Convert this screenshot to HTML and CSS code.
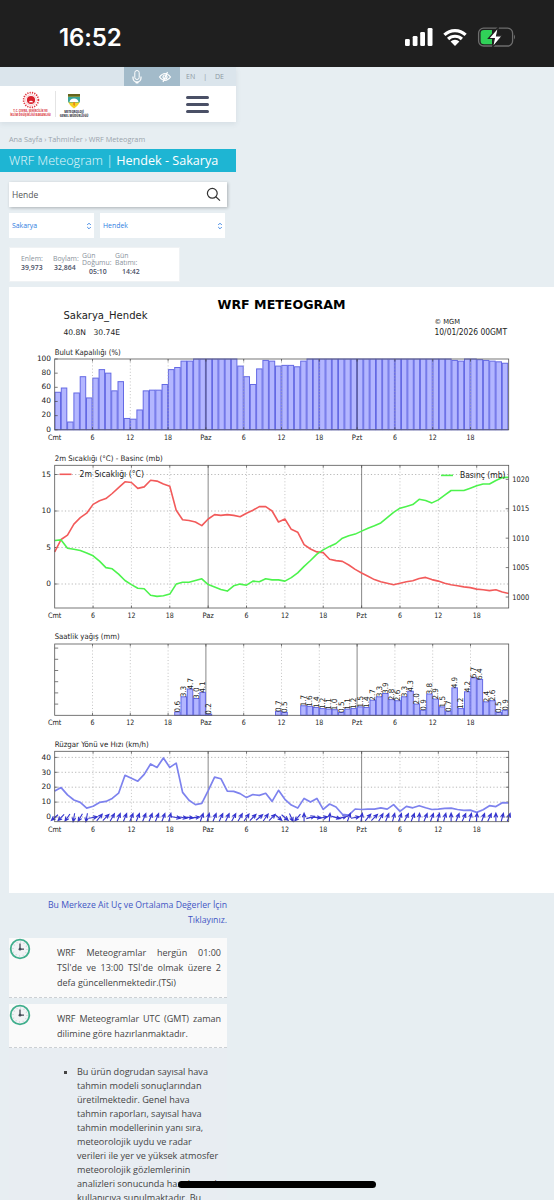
FILE: index.html
```html
<!DOCTYPE html>
<html lang="tr">
<head>
    <meta charset="UTF-8">
    <meta name="viewport" content="width=device-width, initial-scale=1.0">
    <title>WRF Meteogram - Hendek - Sakarya</title>
    <link rel="stylesheet" href="styles.css">
</head>
<body>
    <div class="status-bar">
        <span class="clock">16:52</span>
        <svg class="status-icons" width="112" height="22" viewBox="0 0 112 22">
            <g fill="#fff">
                <rect x="0" y="13" width="4.8" height="7" rx="1.3"/>
                <rect x="7.700" y="10" width="4.8" height="10" rx="1.3"/>
                <rect x="15.200" y="6" width="4.8" height="14" rx="1.3"/>
                <rect x="22.600" y="2" width="4.9" height="18" rx="1.3"/>
                <path d="M50 20 L45.6 15.6 A6.2 6.2 0 0 1 54.4 15.6 Z"/>
            </g>
            <g fill="none" stroke="#fff" stroke-width="3.200">
                <path d="M39.4 8.9 A15.3 15.3 0 0 1 60.6 8.9"/>
                <path d="M43.1 13 A10 10 0 0 1 56.9 13"/>
            </g>
            <rect x="73.600" y="2.200" width="34" height="17.800" rx="5" fill="none" stroke="#6d6d6d" stroke-width="1.300"/>
            <path d="M109 8.500 Q111 11 109 13.500Z" fill="#6d6d6d"/>
            <path d="M79 4 H87 V18.300 H79 Q75.600 18.300 75.600 15 V7.300 Q75.600 4 79 4Z" fill="#30d158"/>
            <path d="M93.500 1 L83.500 12.500 H89.300 L87.500 21.300 L97.300 9.800 H91.600 Z" fill="#fff" stroke="#1f1f1f" stroke-width="1.200"/>
        </svg>
    </div>

    <header class="header">
        <div class="topline">
            <div class="access">
                <svg width="12" height="16" viewBox="0 0 12 16" fill="none" stroke="#fff" stroke-width="1">
                    <rect x="3.800" y="1.500" width="4.400" height="9" rx="2.200"/>
                    <path d="M2 7.500 V9 A4 4 0 0 0 10 9 V7.500 M6 13 V14.500" stroke-width="1.200"/>
                    <path d="M4.500 13.500 H7.500" stroke-width="1.500"/>
                </svg>
                <svg width="14" height="12" viewBox="0 0 14 12" fill="none" stroke="#fff" stroke-width="1.200">
                    <path d="M1.500 6 Q7 -1 12.500 6 Q7 13 1.500 6Z"/>
                    <circle cx="7" cy="6" r="2"/>
                    <path d="M9.500 1 L5 11"/>
                </svg>
            </div>
            <div class="langs"><span>EN</span><span>|</span><span>DE</span></div>
        </div>
        <div class="navbar">
            <div class="logo ministry">
                <svg width="20" height="19" viewBox="0 0 20 19">
                    <circle cx="10" cy="9.500" r="7.800" fill="none" stroke="#e0343d" stroke-width="1.800" stroke-dasharray="1.300 1.200"/>
                    <circle cx="10" cy="9.500" r="5.600" fill="none" stroke="#f3a0a4" stroke-width=".6"/>
                    <circle cx="10" cy="9.500" r="4.300" fill="#d81f2a"/>
                    <path d="M7.500 11.800 Q10 9 12.500 11.800Z" fill="#fff"/>
                </svg>
                <p>T.C. ÇEVRE, ŞEHİRCİLİK VE<br>İKLİM DEĞİŞİKLİĞİ BAKANLIĞI</p>
            </div>
            <div class="logo mgm">
                <svg width="14" height="16" viewBox="0 0 14 16">
                    <path d="M1 1 H13 V8 Q12 12 7 15.500 Q2 12 1 8Z" fill="#f5d323"/>
                    <path d="M1 3.500 H13 V8 L12.500 9.500 H1.500 L1 8Z" fill="#3aa59b"/>
                    <path d="M1 1 H13 V3.500 H1Z" fill="#66641d"/>
                    <path d="M2.500 9 Q3 5.500 7 5.500 Q11 5.500 11.500 9Z" fill="#fff"/>
                    <path d="M6.200 9 H8 V13 L6.200 12Z" fill="#e48a1c"/>
                </svg>
                <p>METEOROLOJİ<br>GENEL MÜDÜRLÜĞÜ</p>
            </div>
            <button class="menu-toggle" aria-label="Menü"><i></i><i></i><i></i></button>
        </div>
    </header>

    <nav class="breadcrumb">Ana Sayfa › Tahminler › WRF Meteogram</nav>
    <h1 class="page-title">WRF Meteogram | <b>Hendek - Sakarya</b></h1>

    <div class="search">
        <span>Hende</span>
        <svg width="15" height="15" viewBox="0 0 15 15" fill="none" stroke="#333" stroke-width="1.200">
            <circle cx="6.300" cy="6.300" r="4.900"/>
            <path d="M9.800 9.800 L14 13.600"/>
        </svg>
    </div>
    <div class="selects">
        <div class="select city">Sakarya
            <svg width="6" height="8" viewBox="0 0 6 8"><path d="M1.200 3 L3 1.200 L4.800 3 M1.200 5 L3 6.800 L4.800 5"/></svg>
        </div>
        <div class="select district">Hendek
            <svg width="6" height="8" viewBox="0 0 6 8"><path d="M1.200 3 L3 1.200 L4.800 3 M1.200 5 L3 6.800 L4.800 5"/></svg>
        </div>
    </div>
    <div class="info">
        <div class="cell"><span>Enlem:</span><b>39,973</b></div>
        <div class="cell"><span>Boylam:</span><b>32,864</b></div>
        <div class="cell two"><span>Gün<br>Doğumu:</span><b>05:10</b></div>
        <div class="cell two"><span>Gün<br>Batımı:</span><b>14:42</b></div>
    </div>

    <svg id="meteogram" class="meteogram" viewBox="9 287 545 606"></svg>

    <div class="extremes"><a>Bu Merkeze Ait Uç ve Ortalama Değerler İçin<br>Tıklayınız.</a></div>

    <div class="notice">
        <svg class="notice-icon" width="22" height="22" viewBox="0 0 22 22">
            <circle cx="11" cy="11" r="9.300" fill="#f1f3f5" stroke="#3fae8c" stroke-width="1.800"/>
            <circle cx="11" cy="11" r="7" fill="none" stroke="#bfc6cc" stroke-width="1.200" stroke-dasharray=".8 2.865"/>
            <path d="M11 5.500 V11.200 H15" fill="none" stroke="#444a55" stroke-width="1.300"/>
            <circle cx="11" cy="11.200" r="1.400" fill="#444a55"/>
        </svg>
        <p class="fill">WRF Meteogramlar hergün 01:00</p>
        <p class="fill">TSİ'de ve 13:00 TSİ'de olmak üzere 2</p>
        <p>defa güncellenmektedir.(TSi)</p>
    </div>
    <div class="notice">
        <svg class="notice-icon" width="22" height="22" viewBox="0 0 22 22">
            <circle cx="11" cy="11" r="9.300" fill="#f1f3f5" stroke="#3fae8c" stroke-width="1.800"/>
            <circle cx="11" cy="11" r="7" fill="none" stroke="#bfc6cc" stroke-width="1.200" stroke-dasharray=".8 2.865"/>
            <path d="M11 5.500 V11.200 H15" fill="none" stroke="#444a55" stroke-width="1.300"/>
            <circle cx="11" cy="11.200" r="1.400" fill="#444a55"/>
        </svg>
        <p class="fill">WRF Meteogramlar UTC (GMT) zaman</p>
        <p>dilimine göre hazırlanmaktadır.</p>
    </div>
    <ul class="details">
        <li>Bu ürün dogrudan sayısal hava<br>tahmin modeli sonuçlarından<br>üretilmektedir. Genel hava<br>tahmin raporları, sayısal hava<br>tahmin modellerinin yanı sıra,<br>meteorolojik uydu ve radar<br>verileri ile yer ve yüksek atmosfer<br>meteorolojik gözlemlerinin<br>analizleri sonucunda hazırlanarak<br>kullanıcıya sunulmaktadır. Bu</li>
    </ul>
    <div class="home-indicator"></div>

    <script src="meteogram.js"></script>
</body>
</html>
```

FILE: styles.css
```css
* {
    margin: 0;
    padding: 0;
    box-sizing: border-box;
}

:root {
    --page-bg: #e7eef2;
    --accent: #1eb5d3;
    --link: #4255c4;
    --blue: #2e7de1;
}

body {
    width: 554px;
    height: 1200px;
    overflow: hidden;
    position: relative;
    background-color: var(--page-bg);
    font-family: "Open Sans", sans-serif;
    color: #444;
    font-size: 8px;
}

p, span, b, a, h1, nav {
    white-space: nowrap;
}

.status-bar {
    height: 67px;
    padding: 7px 37px 0 59px;
    background-color: #1f1f1f;
    display: flex;
    justify-content: space-between;
    align-items: center;
}

.clock {
    font-family: Inter, sans-serif;
    font-size: 24px;
    font-weight: 600;
    color: #fff;
    letter-spacing: -0.1px;
}

.header {
    width: 236px;
    height: 55px;
    box-shadow: 0 2px 5px rgba(80, 110, 130, 0.12);
}

.topline {
    height: 19px;
    background-color: #dbe5ec;
    display: flex;
    padding-left: 124px;
}

.access {
    width: 56px;
    background-color: #a3bbca;
    display: flex;
    align-items: center;
    justify-content: space-between;
    padding: 0 8px 0 7px;
}

.langs {
    display: flex;
    align-items: center;
    gap: 8px;
    padding-left: 6px;
    font-size: 7px;
    color: #8d99a3;
}

.navbar {
    height: 36px;
    background-color: #fff;
    display: flex;
    align-items: flex-start;
}

.logo {
    display: flex;
    flex-direction: column;
    align-items: center;
    font-weight: 800;
    line-height: 4px;
}

.ministry {
    width: 47px;
    height: 26px;
    margin: 5px 0 0 9px;
    padding-right: 3px;
    border-right: 1px solid #e4e4e4;
    font-size: 2.7px;
    color: #dc4b52;
}

.mgm {
    width: 28px;
    margin: 7px 0 0 4px;
    font-size: 2.8px;
    color: #3c4250;
}

.mgm p {
    margin-top: 1px;
}

.logo p {
    text-align: center;
}

.menu-toggle {
    width: 23px;
    margin: 10px 0 0 98px;
    border: none;
    background: none;
    display: flex;
    flex-direction: column;
    gap: 4px;
}

.menu-toggle i {
    height: 3px;
    border-radius: 1.5px;
    background-color: #4a5066;
}

.breadcrumb {
    height: 27px;
    padding: 12px 0 0 9px;
    font-size: 7.3px;
    line-height: 10px;
    color: #9aa4ac;
}

.page-title {
    width: 236px;
    height: 23px;
    padding-left: 9px;
    background-color: var(--accent);
    color: #e8f8fb;
    font-size: 12.6px;
    font-weight: 300;
    line-height: 23px;
}

.page-title b {
    font-weight: 400;
    color: #fff;
}

.search {
    width: 218px;
    height: 25px;
    margin: 10px 0 0 9px;
    padding: 0 6px 0 3px;
    background-color: #fff;
    box-shadow: 1px 1px 3px rgba(0, 0, 0, 0.25);
    display: flex;
    align-items: center;
    justify-content: space-between;
    font-size: 8.5px;
    color: #555;
}

.selects {
    display: flex;
    gap: 6px;
    margin: 6px 0 0 9px;
}

.select {
    height: 25px;
    padding: 0 2.5px 0 3px;
    background-color: #fff;
    display: flex;
    align-items: center;
    justify-content: space-between;
    font-size: 6.9px;
    color: var(--blue);
}

.select path {
    fill: none;
    stroke: var(--blue);
    stroke-width: 0.9;
}

.city {
    width: 85px;
}

.district {
    width: 125px;
}

.info {
    width: 171px;
    height: 35px;
    margin: 9px 0 0 9px;
    padding-left: 11px;
    background-color: #fff;
    border: 1px solid #eff2f4;
    display: flex;
    font-size: 6.9px;
    line-height: 7px;
    color: #8a929c;
}

.cell {
    width: 33px;
    padding-top: 7px;
}

.cell span, .cell b {
    display: block;
}

.cell b {
    margin-top: 2px;
    font-weight: 600;
    color: #4a5066;
}

.cell:nth-child(2) {
    width: 28px;
}

.cell:nth-child(2) span {
    margin-left: -1px;
}

.cell.two {
    width: 33px;
    padding-top: 4px;
}

.cell.two b {
    padding-left: 7px;
}

.meteogram {
    display: block;
    width: 545px;
    height: 606px;
    margin: 5px 0 0 9px;
    background-color: #fff;
    font-family: "DejaVu Sans", sans-serif;
    fill: #222;
}

.extremes {
    width: 227px;
    height: 45px;
    padding-top: 5px;
    text-align: right;
    font-size: 8.7px;
    line-height: 15px;
    color: var(--link);
}

.notice {
    position: relative;
    width: 218px;
    margin: 0 0 6px 9px;
    padding: 7px 6px 6px 48px;
    background-color: #fafafa;
    border-bottom: 1px dashed #ccd0d4;
    font-size: 9px;
    line-height: 15.2px;
}

.fill {
    text-align-last: justify;
}

.notice-icon {
    position: absolute;
    left: 0;
    top: 0;
}

.details {
    width: 218px;
    margin: -6px 0 0 9px;
    padding: 17px 0 0 68px;
    background-color: #e8edf2;
    list-style: square;
    font-size: 9.1px;
    line-height: 14px;
    white-space: nowrap;
}

.home-indicator {
    position: absolute;
    left: 178px;
    top: 1181px;
    width: 198px;
    height: 7px;
    border-radius: 4px;
    background-color: #000;
}
```

FILE: meteogram.js
```js
const svg = document.getElementById('meteogram');
const LEFT = 54.7;
const RIGHT = 508.7;
const BAR = 6.3;
const STEP = 6.394;

const clouds = [53, 59, 11, 52, 75, 45, 73, 85, 80, 55, 68, 16, 15, 28, 55, 56, 56, 64, 85, 88, 97, 97,
    100, 100, 100, 100, 100, 100, 100, 90, 75, 64, 86, 98, 97, 90, 91, 91, 89, 97];
while (clouds.length < 63) clouds.push(100);
clouds.push(98, 97, 100, 100, 99, 98, 97, 96, 94);

const temps = [4.4, 6.1, 6.7, 8.2, 9.1, 9.7, 10.9, 11.4, 11.7, 12.4, 13.2, 14, 13.9, 13.1, 13.3, 14.2, 14.1, 13.7,
    13.4, 10.1, 8.8, 8.7, 8.5, 8.0, 8.9, 9.5, 9.4, 9.5, 9.4, 9.2, 9.7, 10.1, 10.6, 10.6, 10, 8.5, 8.9, 7.5, 7.1, 5.4,
    4.8, 4.4, 4.3, 3.4, 3.2, 3.1, 2.6, 2.0, 1.5, 1.05, 0.6, 0.3, 0.1, -0.1, 0.1, 0.3, 0.45, 0.75, 0.9, 0.6, 0.4, 0.1,
    -0.1, -0.25, -0.4, -0.5, -0.7, -0.8, -0.9, -0.8, -1.1, -1.3];

// mb above 1000
const pressure = [9.6, 9.7, 8.3, 8.1, 7.9, 7.5, 7, 6.1, 5, 4.8, 3.9, 2.8, 2.1, 1.5, 1.4, 0.3, 0.1, 0.2, 0.5, 2.2,
    2.5, 2.5, 2.8, 3.1, 2.1, 1.7, 1.3, 1, 1.9, 2.2, 2, 2.7, 2.6, 3.1, 2.9, 2.9, 2.7, 3.3, 4.1, 5.2, 6.2, 7.3, 8, 8.6,
    9.1, 10, 10.4, 10.7, 11.2, 11.7, 12.1, 12.6, 13.5, 14.4, 15.1, 15.4, 15.7, 16.6, 16.4, 16, 16.5, 17.3, 18.1, 18.1,
    18.1, 18.5, 18.9, 19.2, 19.2, 19.8, 20.3, 20.35];

const rain = { 19: 0.6, 20: 3.3, 21: 4.7, 22: 3.0, 23: 4.1, 24: 0.2, 35: 0.7, 36: 0.5 };
[1.7, 1.6, 1.4, 1.2, 1.1, 1.0, 0.5, 1.1, 1.2, 1.5, 1.4, 2.7, 3.3, 3.9, 2.8, 2.6, 3.3, 4.3, 2.0, 0.9, 3.8, 2.9, 1.5,
    0.7, 4.9, 1.2, 4.2, 6.7, 6.4, 2.4, 2.6, 0.5, 0.9].forEach((v, i) => { rain[39 + i] = v; });

const wind = [17.5, 19.7, 14.8, 11.4, 9.8, 6, 7.2, 9.8, 10.5, 12.5, 16, 28, 26, 24, 28.6, 35.6, 33.3, 39.6, 33.3, 36.2,
    16.5, 11.2, 8.3, 9.2, 17.7, 26.8, 25.7, 17.4, 17.2, 15.7, 13, 15, 14.5, 15.9, 10.5, 17.9, 11.9, 8, 6, 12.5, 10,
    12.5, 5.1, 8.7, 6.7, 1.8, 1.3, 5.4, 5, 5.3, 5.3, 6.2, 5.3, 8.3, 3.8, 7.2, 6.2, 7.6, 6.2, 5, 5.3, 5.8, 6, 5, 4.5,
    4.6, 3.1, 4.9, 7.6, 7, 9.6, 9.4];

// arrow heading in degrees, clockwise from north
const dirs = [230, 225, 215, 190, 210, 190, 80, 40, 45, 30, 22, 22, 22, 22, 22, 22, 22, 20, 15, 100, 100, 95, 85, 20,
    15, 22, 25, 25, 28, 30, 35, 45, 50, 35, 45, 130, 130, 155, 220, 0, 75, 95, 80, 5, 105, 75, 20, 80, 10, 40, 45, 30,
    22, 15, 20, 28, 22, 5, 22, 20, 15, 15, 0, 22, 25, 15, 5, 20, 25, 0, 15, 20];

let out = '';

function line(x1, y1, x2, y2, color, width, dash) {
    out += `<line x1="${x1}" y1="${y1}" x2="${x2}" y2="${y2}" stroke="${color}" stroke-width="${width}"` +
        (dash ? ` stroke-dasharray="${dash}"` : '') + '/>';
}

function text(x, y, str, size, anchor, width, extra) {
    out += `<text x="${x}" y="${y}" font-size="${size}" text-anchor="${anchor || 'start'}"` +
        (width ? ` textLength="${width}" lengthAdjust="spacingAndGlyphs"` : '') + ` ${extra || ''}>${str}</text>`;
}

function frame(top, bottom) {
    out += `<rect x="${LEFT}" y="${top}" width="${RIGHT - LEFT}" height="${bottom - top}" fill="none" stroke="#555" stroke-width="0.8"/>`;
}

function hours(top, bottom, step) {
    ['Cmt', 6, 12, 18, 'Paz', 6, 12, 18, 'Pzt', 6, 12, 18].forEach((label, i) => {
        const x = LEFT + i * 6 * step;
        const day = i % 4 === 0;
        if (i > 0) {
            line(x, top, x, bottom, day ? '#555' : '#aaa', 0.7, day ? '' : '1 2.2');
            line(x, top, x, top + 2.5, '#444', 0.7);
            line(x, bottom, x, bottom - 2.5, '#444', 0.7);
        }
        const width = { Cmt: 13.5, Paz: 11.5, Pzt: 10.5 }[label] || (label > 9 ? 8 : 4);
        text(x, bottom + 9.8, label, 7.4, 'middle', width);
    });
}

function bar(i, y, bottom) {
    out += `<rect x="${LEFT + i * BAR + 0.3}" y="${y}" width="5.5" height="${bottom - y}" fill="#b3b6ff" stroke="#6469e4" stroke-width="1"/>`;
}

function curve(values, toY, color, width) {
    const points = values.map((v, i) => `${(LEFT + i * STEP).toFixed(1)},${toY(v).toFixed(1)}`).join(' ');
    out += `<polyline points="${points}" fill="none" stroke="${color}" stroke-width="${width}" stroke-linejoin="round"/>`;
}

text(217.5, 309, 'WRF METEOGRAM', 13, 'start', 128, 'font-weight="bold" fill="#000"');
text(63.5, 318.7, 'Sakarya_Hendek', 10.8, 'start', 84);
text(63.5, 334.8, '40.8N', 7.8, 'start', 22.5);
text(93.5, 334.8, '30.74E', 7.8, 'start', 26.5);
text(434.5, 323.8, '© MGM', 7, 'start', 25.5);
text(434.5, 335.2, '10/01/2026 00GMT', 8, 'start', 72.5);

// cloud cover
text(54.7, 354.7, 'Bulut Kapalılığı (%)', 7.8, 'start', 66);
clouds.forEach((v, i) => bar(i, 429.8 - v * 0.708, 429.8));
hours(359, 429.8, BAR);
[0, 20, 40, 60, 80, 100].forEach(v => {
    const y = 429.8 - v * 0.708;
    line(LEFT, y, LEFT + 3, y, '#444', 0.7);
    text(51, y + 1.800, v, 7.4, 'end');
});
frame(359, 429.8);

// temperature and pressure
text(54.7, 461.3, '2m Sıcaklığı (°C) - Basinc (mb)', 7.6, 'start', 108);
[0, 5, 10, 15].forEach(v => {
    const y = 584 - v * 7.3;
    line(LEFT, y, RIGHT, y, '#999', 0.7, '1.2 2.2');
    line(LEFT, y, LEFT + 3, y, '#444', 0.7);
    text(51, y + 2.300, v, 7.4, 'end');
});
hours(465.3, 608, STEP);
curve(temps, v => 584 - v * 7.3, '#f25a5a', 1.6);
curve(pressure, v => 597 - v * 5.883, '#4df34d', 1.6);
[0, 5, 10, 15, 20].forEach(v => {
    const y = 597 - v * 5.883;
    line(RIGHT, y, RIGHT - 3, y, '#444', 0.7);
    text(512.3, y + 2.500, 1000 + v, 7.6, 'start', 17);
});
line(59.5, 474.3, 71.5, 474.3, '#f25a5a', 1.6);
text(79.5, 476.5, '2m Sıcaklığı (°C)', 8, 'start', 64.5);
line(441, 475.4, 453, 475.4, '#4df34d', 1.6);
text(460, 477.7, 'Basınç (mb)', 8, 'start', 45.5);
frame(465.3, 608);

// hourly rain
text(54.7, 639.3, 'Saatlik yağış (mm)', 7.6, 'start', 65);
hours(644, 715.3, BAR);
[2, 4, 6, 8, 10, 12].forEach(v => line(LEFT, 715.3 - v * 5.6, LEFT + 3.5, 715.3 - v * 5.6, '#444', 0.7));
Object.keys(rain).forEach(i => bar(+i, 715.3 - rain[i] * 5.6, 715.3));
Object.keys(rain).forEach(i => {
    const x = LEFT + i * BAR + 5.6;
    const y = 715.3 - rain[i] * 5.6 + 0.5;
    text(x, y, rain[i].toFixed(1), 7.6, 'start', 11.5, `transform="rotate(-90 ${x} ${y})"`);
});
frame(644, 715.3);

// wind
text(54.7, 746.6, 'Rüzgar Yönü ve Hızı (km/h)', 7.6, 'start', 94);
[0, 10, 20, 30, 40].forEach(v => {
    const y = 817 - v * 1.49;
    line(LEFT, y, RIGHT, y, '#999', 0.7, '1.2 2.2');
    line(LEFT, y, LEFT + 3, y, '#444', 0.7);
    line(RIGHT, y, RIGHT - 3, y, '#444', 0.7);
    text(51, y + 2.200, v, 7.4, 'end');
});
hours(751.3, 821.7, STEP);
curve(wind, v => 817 - v * 1.49, '#7d82ee', 1.7);
dirs.forEach((d, i) => {
    out += `<path d="M0 4.300 V-4.300 M-1.800 -0.300 L0 -4.300 L1.800 -0.300" transform="translate(${LEFT + i * STEP} 817.500) rotate(${d})" fill="none" stroke="#3434cf" stroke-width="1.100"/>`;
});
frame(751.3, 821.7);

svg.innerHTML = out;
```
